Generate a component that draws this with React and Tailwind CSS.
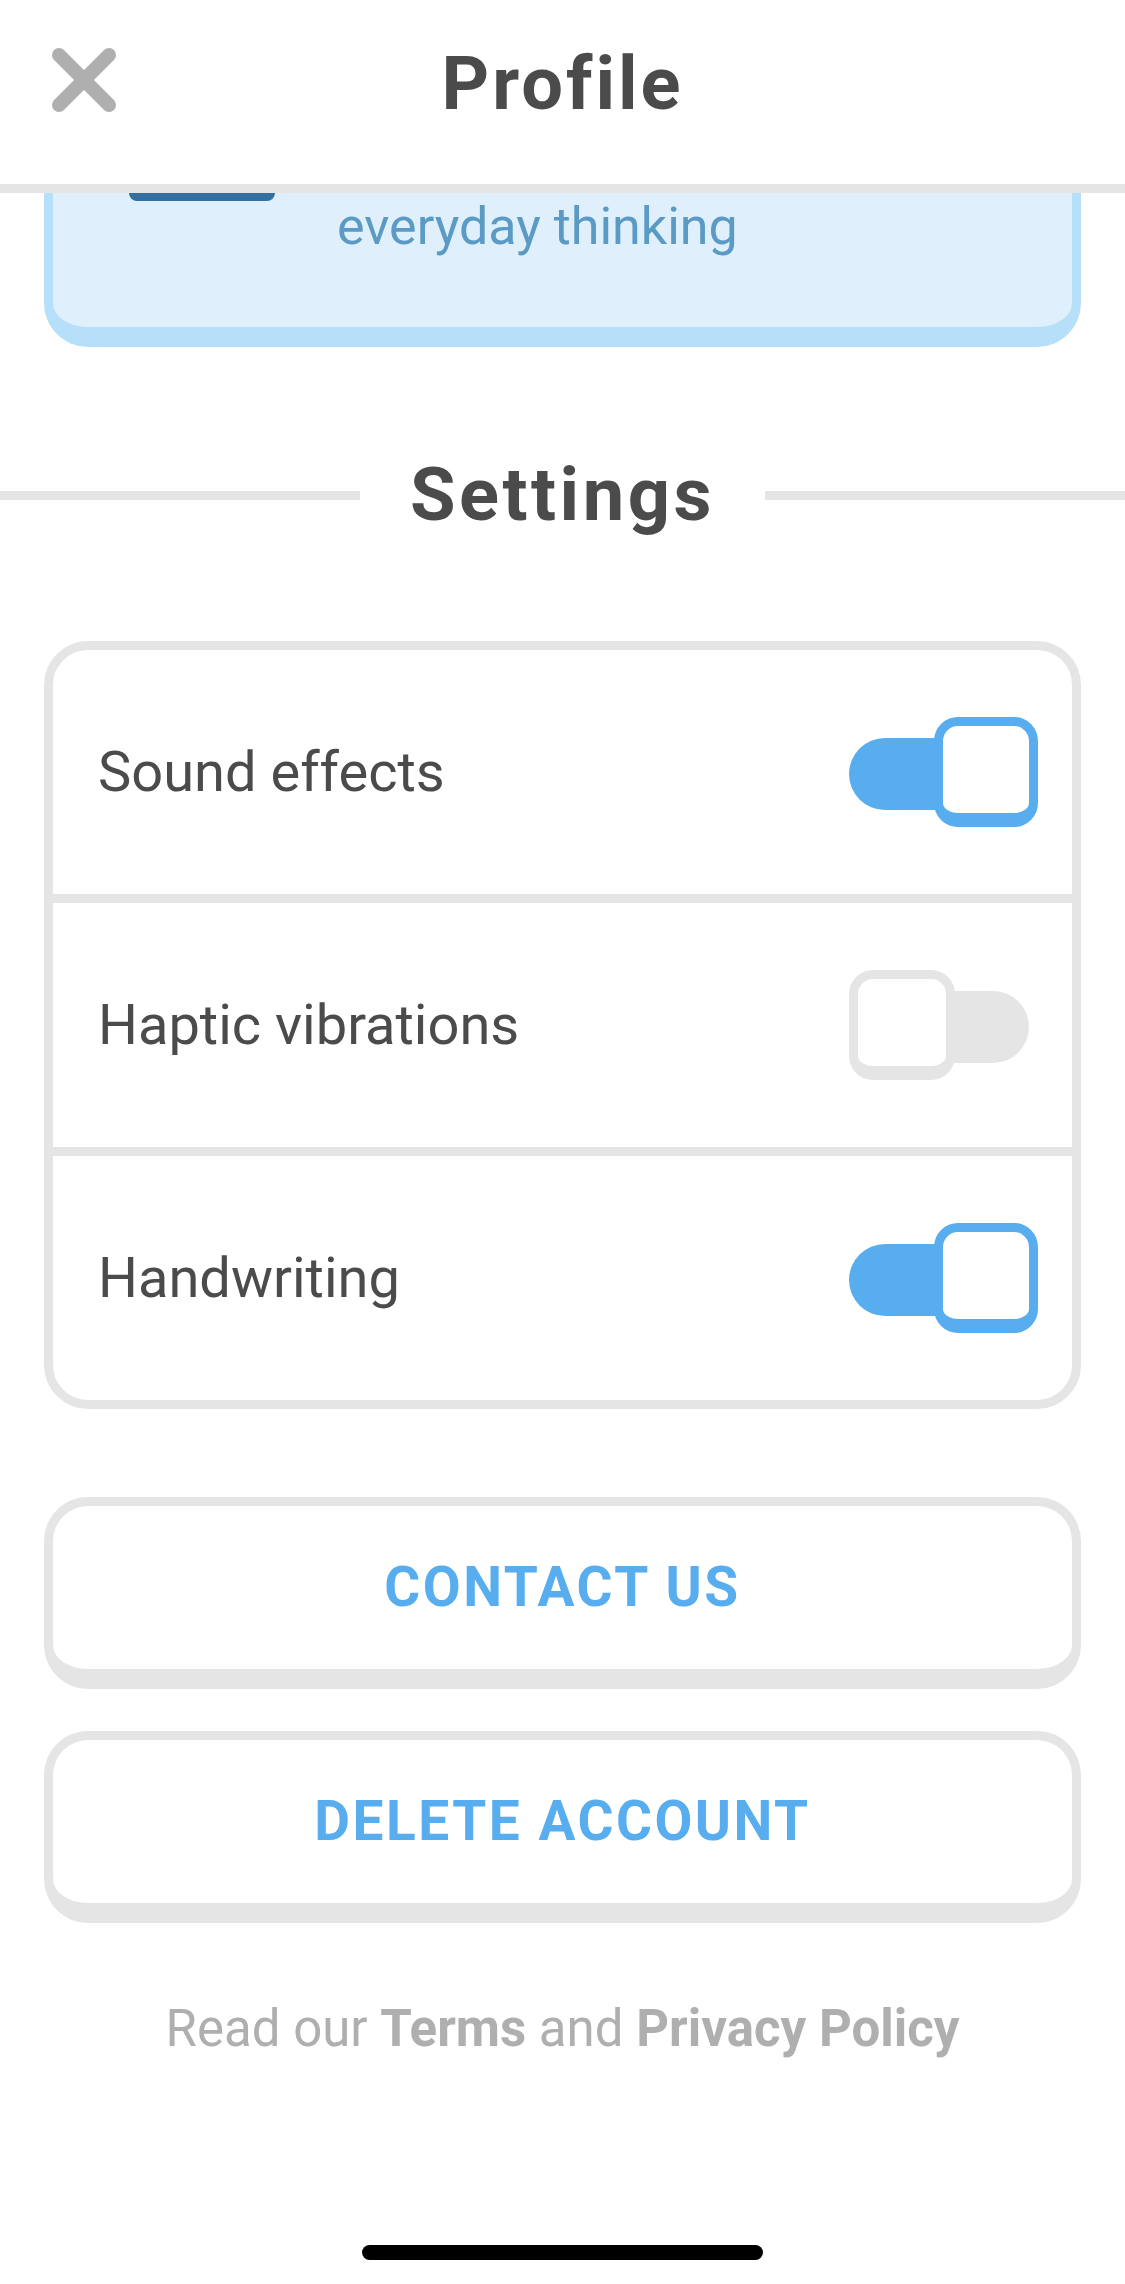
import { useState } from "react";

/* ---- bits ---------------------------------------------------------------- */
function CloseIcon() {
  return (
    <svg width="66" height="66" viewBox="0 0 66 66" fill="none">
      <path
        d="M8 8 L58 58 M58 8 L8 58"
        stroke="#afafaf"
        strokeWidth="14"
        strokeLinecap="round"
      />
    </svg>
  );
}

function Toggle({ on, onClick }) {
  return (
    <button type="button" onClick={onClick} className="relative h-[110px] w-[189px] shrink-0">
      {on ? (
        <>
          <span className="absolute left-0 top-[21px] h-[72px] w-[150px] rounded-l-full bg-[#58adef]" />
          <span className="absolute right-0 top-0 h-[110px] w-[104px] rounded-[24px] border-[9px] border-b-[14px] border-[#58adef] bg-white" />
        </>
      ) : (
        <>
          <span className="absolute right-[9px] top-[21px] h-[72px] w-[110px] rounded-r-full bg-[#e5e5e5]" />
          <span className="absolute left-0 top-0 h-[110px] w-[106px] rounded-[24px] border-[9px] border-b-[14px] border-[#e5e5e5] bg-white" />
        </>
      )}
    </button>
  );
}

function Row({ label, on, onToggle, first }) {
  return (
    <div
      className={
        "flex h-[244px] items-center justify-between pl-[45px] pr-[34px]" +
        (first ? "" : " box-content border-t-[9px] border-[#e5e5e5]")
      }
    >
      <span className="text-[56px] leading-none text-[#4b4b4b]">{label}</span>
      <Toggle on={on} onClick={onToggle} />
    </div>
  );
}

function BigButton({ children }) {
  return (
    <button
      type="button"
      className="mx-[44px] flex h-[192px] w-[1037px] items-center justify-center rounded-[44px] border-[9px] border-b-[20px] border-[#e5e5e5] bg-white text-[55px] font-bold leading-none tracking-[2.5px] text-[#58adef]"
    >
      {children}
    </button>
  );
}

/* ---- page ---------------------------------------------------------------- */
export default function App() {
  const [sound, setSound] = useState(true);
  const [haptic, setHaptic] = useState(false);
  const [hand, setHand] = useState(true);

  return (
    <div className="h-[2284px] w-[1125px] overflow-hidden bg-white font-['Roboto',sans-serif]">
      {/* Header */}
      <header className="box-content h-[184px] border-b-[9px] border-[#e5e5e5]">
        <div className="relative flex h-[168px] items-center justify-center">
          <button type="button" className="absolute left-[51px] top-[47px]">
            <CloseIcon />
          </button>
          <h1 className="text-[74px] font-bold leading-none tracking-[3px] text-[#4b4b4b]">
            Profile
          </h1>
        </div>
      </header>

      {/* Course card (scrolled under header) */}
      <div className="mx-[44px] h-[154px] rounded-b-[44px] border-x-[9px] border-b-[20px] border-[#b6e0fa] bg-[#dff0fc]">
        <div className="ml-[76px] h-[8px] w-[146px] rounded-b-[18px] bg-[#33709f]" />
        <p className="ml-[284px] text-[52px] leading-none text-[#5a9ac4]">everyday thinking</p>
      </div>

      {/* Settings divider */}
      <div className="mt-[98px] flex h-[100px] items-center">
        <div className="h-[9px] flex-1 bg-[#e5e5e5]" />
        <h2 className="mx-[50px] text-[74px] font-bold leading-none tracking-[3.5px] text-[#4b4b4b]">
          Settings
        </h2>
        <div className="h-[9px] flex-1 bg-[#e5e5e5]" />
      </div>

      {/* Settings card */}
      <div className="mx-[44px] mt-[96px] rounded-[44px] border-[9px] border-[#e5e5e5]">
        <Row first label="Sound effects" on={sound} onToggle={() => setSound(!sound)} />
        <Row label="Haptic vibrations" on={haptic} onToggle={() => setHaptic(!haptic)} />
        <Row label="Handwriting" on={hand} onToggle={() => setHand(!hand)} />
      </div>

      {/* Actions */}
      <div className="mt-[88px] flex flex-col gap-[42px]">
        <BigButton>CONTACT US</BigButton>
        <BigButton>DELETE ACCOUNT</BigButton>
      </div>

      <p className="mt-[80px] text-center text-[51px] leading-none text-[#afafaf]">
        Read our <span className="font-bold">Terms</span> and{" "}
        <span className="font-bold">Privacy Policy</span>
      </p>

      {/* Home indicator */}
      <div className="mx-auto mt-[191px] h-[15px] w-[401px] rounded-full bg-black" />
    </div>
  );
}
